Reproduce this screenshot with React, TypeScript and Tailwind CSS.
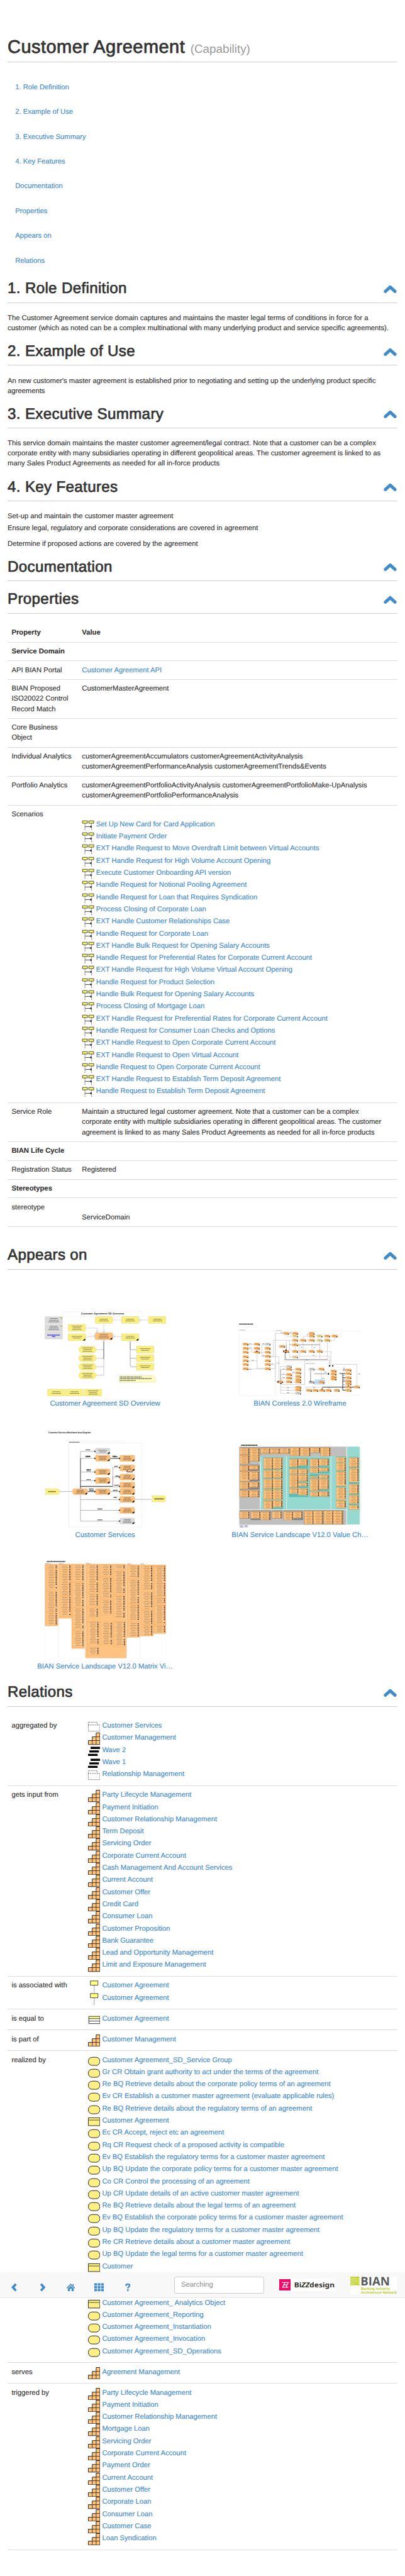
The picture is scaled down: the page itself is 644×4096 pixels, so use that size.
import React from "react";

/* ---------- text data ---------- */

const NAV = [
  "1. Role Definition",
  "2. Example of Use",
  "3. Executive Summary",
  "4. Key Features",
  "Documentation",
  "Properties",
  "Appears on",
  "Relations",
];

const SCENARIOS = [
  "Set Up New Card for Card Application",
  "Initiate Payment Order",
  "EXT Handle Request to Move Overdraft Limit between Virtual Accounts",
  "EXT Handle Request for High Volume Account Opening",
  "Execute Customer Onboarding API version",
  "Handle Request for Notional Pooling Agreement",
  "Handle Request for Loan that Requires Syndication",
  "Process Closing of Corporate Loan",
  "EXT Handle Customer Relationships Case",
  "Handle Request for Corporate Loan",
  "EXT Handle Bulk Request for Opening Salary Accounts",
  "Handle Request for Preferential Rates for Corporate Current Account",
  "EXT Handle Request for High Volume Virtual Account Opening",
  "Handle Request for Product Selection",
  "Handle Bulk Request for Opening Salary Accounts",
  "Process Closing of Mortgage Loan",
  "EXT Handle Request for Preferential Rates for Corporate Current Account",
  "Handle Request for Consumer Loan Checks and Options",
  "EXT Handle Request to Open Corporate Current Account",
  "EXT Handle Request to Open Virtual Account",
  "Handle Request to Open Corporate Current Account",
  "EXT Handle Request to Establish Term Deposit Agreement",
  "Handle Request to Establish Term Deposit Agreement",
];

type IconKind = "group" | "cap" | "wave" | "life" | "table" | "service" | "object" | "sequence" | "none";
type Item = [IconKind, string];

const caps = (...names: string[]): Item[] => names.map((n) => ["cap", n]);
const services = (...names: string[]): Item[] => names.map((n) => ["service", n]);

const RELATIONS: { label: string; items: Item[] }[] = [
  {
    label: "aggregated by",
    items: [
      ["group", "Customer Services"],
      ["cap", "Customer Management"],
      ["wave", "Wave 2"],
      ["wave", "Wave 1"],
      ["group", "Relationship Management"],
    ],
  },
  {
    label: "gets input from",
    items: caps(
      "Party Lifecycle Management",
      "Payment Initiation",
      "Customer Relationship Management",
      "Term Deposit",
      "Servicing Order",
      "Corporate Current Account",
      "Cash Management And Account Services",
      "Current Account",
      "Customer Offer",
      "Credit Card",
      "Consumer Loan",
      "Customer Proposition",
      "Bank Guarantee",
      "Lead and Opportunity Management",
      "Limit and Exposure Management",
    ),
  },
  {
    label: "is associated with",
    items: [
      ["life", "Customer Agreement"],
      ["life", "Customer Agreement"],
    ],
  },
  { label: "is equal to", items: [["table", "Customer Agreement"]] },
  { label: "is part of", items: caps("Customer Management") },
  {
    label: "realized by",
    items: [
      ...services(
        "Customer Agreement_SD_Service Group",
        "Gr CR Obtain grant authority to act under the terms of the agreement",
        "Re BQ Retrieve details about the corporate policy terms of an agreement",
        "Ev CR Establish a customer master agreement (evaluate applicable rules)",
        "Re BQ Retrieve details about the regulatory terms of an agreement",
      ),
      ["object", "Customer Agreement"],
      ...services(
        "Ec CR Accept, reject etc an agreement",
        "Rq CR Request check of a proposed activity is compatible",
        "Ev BQ Establish the regulatory terms for a customer master agreement",
        "Up BQ Update the corporate policy terms for a customer master agreement",
        "Co CR Control the processing of an agreement",
        "Up CR Update details of an active customer master agreement",
        "Re BQ Retrieve details about the legal terms of an agreement",
        "Ev BQ Establish the corporate policy terms for a customer master agreement",
        "Up BQ Update the regulatory terms for a customer master agreement",
        "Re CR Retrieve details about a customer master agreement",
        "Up BQ Update the legal terms for a customer master agreement",
      ),
      ["object", "Customer"],
      ["none", ""],
      ["none", ""],
      ["object", "Customer Agreement_ Analytics Object"],
      ...services(
        "Customer Agreement_Reporting",
        "Customer Agreement_Instantiation",
        "Customer Agreement_Invocation",
        "Customer Agreement_SD_Operations",
      ),
    ],
  },
  { label: "serves", items: caps("Agreement Management") },
  {
    label: "triggered by",
    items: caps(
      "Party Lifecycle Management",
      "Payment Initiation",
      "Customer Relationship Management",
      "Mortgage Loan",
      "Servicing Order",
      "Corporate Current Account",
      "Payment Order",
      "Current Account",
      "Customer Offer",
      "Corporate Loan",
      "Consumer Loan",
      "Customer Case",
      "Loan Syndication",
    ),
  },
];

/* ---------- small icons ---------- */

function TypeIcon({ kind }: { kind: IconKind }) {
  return (
    <svg viewBox="0 0 24 24" className="block size-6 shrink-0" fill="none">
      {kind === "group" && (
        <path d="M.5 8.500V3h17.500v5.500M.5 8.500h23V20.800H.5z" stroke="#555" strokeDasharray="2.200 1.200" />
      )}
      {kind === "cap" && (
        <>
          <path d="M.6 15.600H8.300V8.300H16V.6h7.400V23.400H.6z" fill="#ffc37d" stroke="#111" strokeWidth="1.100" />
          <path d="M8.300 15.600V23.400M16 8.300V23.400M8.300 15.600H23.400M16 8.300H23.400" stroke="#3a2a14" strokeWidth="1.100" />
        </>
      )}
      {kind === "wave" && <path d="M5 3h19v4.400H5zM2.500 10.200h19v4.200H2.500zM0 17.200h19v4H0z" fill="#000" />}
      {kind === "life" && (
        <>
          <path d="M4.600 1h15v8.500h-15z" fill="#ffff80" stroke="#222" />
          <path d="M12.200 10v14" stroke="#444" strokeDasharray="2 1.200" />
        </>
      )}
      {kind === "table" && (
        <>
          <path d="M1.500 5.200h22v14.300h-22z" fill="#fff" />
          <path d="M1.500 5.200h22v4.500h-22z" fill="#ffff80" />
          <path d="M1.500 5.200h22v14.300h-22zM1.500 9.700h22M1.500 14.500h22" stroke="#222" strokeWidth="1.100" />
        </>
      )}
      {kind === "service" && (
        <rect x=".6" y="4" width="22.800" height="16" rx="7.500" fill="#fcef83" stroke="#222" strokeWidth="1.200" />
      )}
      {kind === "object" && (
        <>
          <path d="M.6 4.200h22.800v15.600H.6z" fill="#fcef83" stroke="#2b2b20" strokeWidth="1.200" />
          <path d="M1 8.800h22" stroke="#8a8350" strokeWidth="1.800" />
        </>
      )}
      {kind === "sequence" && (
        <>
          <path d="M6.300 8v13M19.500 8v13" stroke="#444" strokeDasharray="2.500 1" />
          <path d="M1.500 2.700h9.700v4.800H1.500zM14 2.700h9.700v4.800H14z" fill="#ffff66" stroke="#222" />
          <path d="M6.500 14.200H18" stroke="#222" />
          <path d="M17 11.500l3 2.700-3 2.700z" fill="#111" />
        </>
      )}
    </svg>
  );
}

function UpIcon() {
  return (
    <svg viewBox="0 0 26 17" className="mr-px h-[17px] w-[26px]" fill="none">
      <path
        d="M3.500 12.900 13 4.200l9.500 8.700"
        stroke="#428bca"
        strokeWidth="6.200"
        strokeLinecap="round"
        strokeLinejoin="round"
      />
    </svg>
  );
}

/* ---------- diagram thumbnails ---------- */

const ORANGE = "#ffc27d";
const ORANGE_LINE = "#e8a55c";
const YELLOW = "#fbef82";
const YELLOW_LINE = "#e6da70";
const GRAY = "#dcdcdc";

function Node({
  x,
  y,
  w = 103,
  h = 40,
  fill = YELLOW,
  line = YELLOW_LINE,
  r = 1,
  rows = 2,
  text = 3.4,
  mark = false,
}: {
  x: number;
  y: number;
  w?: number;
  h?: number;
  fill?: string;
  line?: string;
  r?: number;
  rows?: number;
  text?: number;
  mark?: boolean;
}) {
  const widths = [0.6, 0.46, 0.54];
  const step = Math.min(10, h / (rows + 1));
  const d = Array.from({ length: rows }, (_, i) => {
    const len = w * widths[(i + Math.round(x)) % 3];
    const yy = y + h / 2 + (i - (rows - 1) / 2) * step;
    return `M${x + (w - len) / 2} ${yy}h${len}`;
  }).join("");
  return (
    <g>
      <rect x={x} y={y} width={w} height={h} rx={r} fill={fill} stroke={line} strokeWidth="2" />
      <path d={d} stroke="#222" strokeOpacity=".72" strokeWidth={text} strokeDasharray="5 1.500 3 1 7 1.500" fill="none" />
      {mark && <path d={`M${x + w - 12} ${y + h - 5}h5v-4h5v4h-4v4h-6z`} fill="#000" stroke="#000" strokeWidth="2" />}
    </g>
  );
}

function Stack({ x, y, w, h, fill = ORANGE, pitch = 9 }: { x: number; y: number; w: number; h: number; fill?: string; pitch?: number }) {
  let words = "";
  let marks = "";
  let n = 0;
  for (let yy = y + 6; yy < y + h - 3; yy += pitch, n++) {
    const len = w * [0.45, 0.58, 0.4, 0.5, 0.62][(n + Math.round(x)) % 5];
    words += `M${x + (w - len) / 2 - 2} ${yy}h${len}`;
    if (n % 11 !== 9) marks += `M${x + w - 8} ${yy - 2}h6v5h-6z`;
  }
  return (
    <g>
      <rect x={x} y={y} width={w} height={h} fill={fill} stroke={ORANGE_LINE} strokeWidth="1.200" />
      <path d={words} stroke="#3c2a14" strokeOpacity=".6" strokeWidth="2.200" strokeDasharray="4 .8 7 .8" fill="none" />
      <path d={marks} fill="#111" />
    </g>
  );
}

function Thumb({ dx, dy, children }: { dx: number; dy: number; children: React.ReactNode }) {
  return (
    <svg viewBox="0 0 240 200" className="block h-[200px] w-[240px]">
      <g transform={`translate(${dx} ${dy}) scale(0.33333)`}>{children}</g>
    </svg>
  );
}

function OverviewDiagram() {
  return (
    <Thumb dx={-27.5} dy={10}>
      <path d="M190 70h472v27H190z" fill="#fff" stroke="#e8e8e8" strokeWidth="2" />
      <text x="426" y="84" textAnchor="middle" fontSize="14.500" fontWeight="700" fill="#000" textLength="254">
        Customer Agreement SD Overview
      </text>
      <g fill="none" stroke="#999" strokeWidth="2">
        <path d="M485 119h53M645 119h55M326 167h68v20M433 140v47M326 220l48-5M538 220l-45-5" strokeDasharray="5 2" />
        <path d="M388 295h45M388 346h45M388 396h45M388 446h45V245" />
        <path d="M627 295h-33q-4 0-4-4V245M627 346h-33q-4 0-4-4M627 396h-28q-9 0-9-9V245" stroke="#666" />
        <path d="M433 243V350" stroke="#555" strokeWidth="3" />
      </g>
      <g fill="#fff" stroke="#999" strokeWidth="2">
        <circle cx="394" cy="188" r="5" />
        <circle cx="433" cy="188" r="5" />
        <circle cx="378" cy="215" r="5" />
        <circle cx="491" cy="216" r="5" />
        <circle cx="433" cy="243" r="5" />
        <circle cx="590" cy="248" r="5" />
        <circle cx="648" cy="119" r="4.500" />
      </g>
      {[100, 146, 191].map((y, i) => (
        <g key={y}>
          <Node x={85} y={y} fill={GRAY} line="#c8c8c8" rows={i === 2 ? 0 : 3} />
          {i < 2 && <path d={`M175 ${y + 2}h7v5h4v5h-7v-5h-4z`} fill="#e8dd4f" stroke="#888" />}
        </g>
      ))}
      <path d="M98 208h76M126 217h20" stroke="#2222dd" strokeWidth="4.500" strokeDasharray="6 1 9 1" />
      <Node x={382} y={99} r={8} />
      <Node x={538} y={99} />
      <Node x={700} y={99} />
      <Node x={222} y={145} rows={3} />
      <Node x={222} y={201} mark />
      <Node x={382} y={195} r={7} fill={ORANGE} line={ORANGE_LINE} rows={3} mark />
      <Node x={538} y={201} mark />
      {[274, 325, 376, 427].map((y) => (
        <Node key={y} x={285} y={y} r={20} rows={3} />
      ))}
      {[274, 325, 376].map((y) => (
        <Node key={y} x={627} y={y} />
      ))}
      <path d="M526 449h200l14 13v26H526z" fill="#ffffc4" stroke="#e0da90" strokeWidth="2" />
      <path d="M528 457h130M528 466h190M528 477h95" stroke="#222" strokeWidth="3.600" strokeDasharray="5 1.500 9 2 3 1" />
      <Node x={100} y={529} />
      <Node x={208} y={529} />
      <Node x={318} y={529} rows={3} />
    </Thumb>
  );
}

const WIRE_NODES: [number, number, string?][] = [
  [120, 255], [120, 280], [120, 303], [120, 330], [120, 353], [120, 376], [120, 401],
  [187, 255], [187, 280], [187, 303],
  [251, 255, GRAY], [251, 280], [251, 303], [251, 327], [251, 353], [251, 376], [251, 401],
  [360, 191], [414, 191], [414, 207, "#f3dfa0"], [512, 191], [512, 207],
  [559, 207, "#f3dfa0"], [604, 207], [648, 207],
  [414, 232], [461, 232], [512, 232], [559, 232, "#f3dfa0"], [604, 232],
  [337, 268], [414, 259], [360, 298], [414, 298], [461, 298], [512, 298], [559, 298], [414, 331, "#f3dfa0"],
  [377, 388, GRAY], [377, 404], [377, 435], [377, 456], [326, 478], [377, 478],
  [432, 404], [432, 426], [432, 447], [432, 465], [432, 479], [432, 511], [432, 527], [432, 546, GRAY],
  [512, 403, GRAY], [569, 403], [512, 481, "#c4c4c4"], [569, 480],
  [642, 415], [642, 432], [642, 450], [642, 462],
  [730, 409], [730, 430], [730, 454], [730, 474], [730, 489], [730, 509], [730, 529], [780, 509],
  [496, 529], [534, 529], [573, 529], [612, 529], [661, 529],
];

function WireframeDiagram() {
  return (
    <Thumb dx={-32.5} dy={10}>
      <path d="M99 143h84" stroke="#111" strokeWidth="5" strokeDasharray="9 1 5 1.500" />
      <path d="M100 179h34" stroke="#666" strokeWidth="2.500" strokeDasharray="5 1" />
      <path d="M318 182h32M320 374h20M492 377h56" stroke="#666" strokeWidth="2.500" strokeDasharray="5 1" />
      <g fill="none" stroke="#ededed" strokeWidth="2">
        <path d="M100 182h211v387H100zM317 184h501v178H317zM317 376h165v190H317zM490 379h328v187H490zM629 398h65v98h-65z" />
      </g>
      <rect x="549" y="473" width="59" height="27" fill="#bfe2fb" stroke="#8ccaf5" strokeWidth="1.500" />
      <g fill="none" stroke="#bbb" strokeWidth="2.200">
        <path d="M155 264h32M155 288h20v23h12M155 361h50M155 409h96M205 318v88h46M220 311h31M233 311v-47h18M233 311v24h18M285 335h16V239h113M285 384h28v100h14M285 407h28V199h47M285 335h49v150" />
        <path d="M396 199h18M380 206v9h34M431 246v60M378 300v-60M397 300V240M478 232v-17h34M478 246v60M530 260v40M577 245v55M622 245v108H373v-40M640 239h26v-18M500 239h12M449 267h128v80M455 267v66h180v60M397 306V339h20M368 315v43h266v30M594 306h49v80M488 353l-2 149H344M655 392v-10h142v125" />
        <path d="M344 478V394h33M344 412h33M344 443h33M344 463h33M344 490v64h88M344 519h88M344 535h88M360 486h17M412 412h20M412 475h5v-42h15M412 486h20M530 411h39M523 415v68M545 488h24M586 415v66M540 438h90M496 529v-12h290" />
      </g>
      <path d="M397 265h180M378 266v40h-18M373 315v38h250M344 412v66M522 415v70M546 438h84" fill="none" stroke="#777" strokeWidth="2.200" />
      <path d="M693 436h20V535h17M713 415h17M713 436h17M713 461h17M713 481h17M713 517h67M590 517h123" fill="none" stroke="#111" strokeWidth="3" />
      <path d="M345 194h10M398 194h10M160 260h12M237 260h10M160 284h10M237 331h10M175 358h10M160 412h10M383 520h11M383 535h11M383 550h11M500 205h8M560 243h12M604 428h12M535 328h10M495 356h12M805 439h12M592 464h10M715 405h12M716 447h10M716 470h10M716 503h10M466 282h8M540 282h8M290 379h10M357 410h12M357 440h12M357 460h12M415 428h12M538 519h10M626 519h12" stroke="#777" strokeWidth="3.500" strokeDasharray="5 1" />
      {WIRE_NODES.map(([x, y, fill], i) => (
        <g key={i}>
          <rect x={x} y={y} width="34" height="14" rx="3" fill={fill ?? "#fdb96c"} stroke={fill ? "#bbb" : "#e9a050"} strokeWidth="1" />
          <path d={`M${x + 7} ${y + 4}h20M${x + 9} ${y + 9}h14`} stroke="#4a3010" strokeOpacity=".55" strokeWidth="2" strokeDasharray="4 1" />
          <path d={`M${x + 27} ${y + 9}h6v5h-6z`} fill="#111" />
        </g>
      ))}
      <path d="M626 433h6v10h-6zM631 387h8v7h-8zM650 387h7v7h-7zM200 301h7v6h-7zM373 295h8v7h-8zM360 301h6v6h-6zM326 482h6v8h-6zM342 492h9v5h-9zM370 308h9v6h-9zM744 505h5v5h-5zM588 525h6v5h-6zM518 480h7v4h-7z" fill="#000" />
    </Thumb>
  );
}

function ServicesDiagram() {
  const middle: [number, number, string?][] = [[384, 190, GRAY], [384, 232], [384, 313], [384, 364], [384, 430], [250, 430]];
  const right: [number, string?][] = [[232], [289], [343], [391], [430], [476], [541], [604, GRAY]];
  return (
    <Thumb dx={-27.5} dy={-20}>
      <text x="104" y="102" fontSize="13" fontWeight="700" fill="#000" textLength="252">
        Customer Services Wireframe Area Diagram
      </text>
      <path d="M226 160V149h325v11M226 160h432v496H226z" fill="none" stroke="#e4e4e4" strokeWidth="2" />
      <path d="M228 154h62" stroke="#333" strokeWidth="3.600" strokeDasharray="6 1.500" />
      <g fill="none" stroke="#777" strokeWidth="2">
        <path d="M171 447h79M295 430V208h88M295 250h88M295 331h88M295 382h88M338 447h45M470 250h58M295 415h192V361h41M487 415V305h41M295 418h233M470 447h58M295 464v158h233M295 494h233M295 558h233M571 343v-20M616 493h100" />
      </g>
      <path d="M295 430V250M338 447h45M470 250h56M295 416h190" stroke="#222" strokeWidth="2.500" fill="none" />
      <path d="M325 199h28M325 236h28M325 241h28M330 316h26M330 324h26M330 376h26M346 431h26M346 439h28M484 236h24M487 241h28M496 297h22M502 355h22M496 409h26M487 440h28M491 481h20M396 550h28M396 615h28M577 330h28" stroke="#222" strokeWidth="4" strokeDasharray="5 1 8 1" />
      {middle.map(([x, y, fill], i) => (
        <Node key={i} x={x} y={y} w={86} h={34} r={6} fill={fill ?? ORANGE} line={fill ? "#ccc" : ORANGE_LINE} rows={y === 190 ? 2 : 3} mark />
      ))}
      {right.map(([y, fill], i) => (
        <Node key={i} x={529} y={y} w={87} h={35} r={6} fill={fill ?? ORANGE} line={fill ? "#ccc" : ORANGE_LINE} rows={3} mark />
      ))}
      <path d="M378 203l8 5-8 5zM378 245l8 5-8 5zM378 326l8 5-8 5zM378 377l8 5-8 5zM378 442l8 5-8 5zM524 245l8 5-8 5zM524 300l8 5-8 5zM524 356l8 5-8 5zM524 411l8 5-8 5zM524 442l8 5-8 5zM524 489l8 5-8 5zM524 553l8 5-8 5zM524 617l8 5-8 5zM566 328l6-8 5 8z" fill="#000" />
      <path d="M84 430h68q19 0 19 17t-19 17H84l7-17zM717 472h68q19 0 19 18t-19 18h-68l7-18z" fill={YELLOW} stroke={YELLOW_LINE} strokeWidth="2" />
      <path d="M104 447h46M733 490h56" stroke="#222" strokeWidth="4.500" strokeDasharray="5 1 8 1" />
    </Thumb>
  );
}

const VALUE_BACK: [number, number, number, number][] = [
  [226, 876, 176, 38], [401, 874, 60, 52], [462, 874, 60, 52], [522, 874, 60, 34], [582, 874, 59, 52],
  [102, 876, 60, 96], [162, 876, 59, 82], [102, 978, 118, 36], [102, 1016, 118, 60], [102, 1079, 118, 46], [102, 1128, 118, 43],
  [102, 1250, 59, 48], [168, 1250, 119, 56], [294, 1250, 60, 48], [362, 1250, 115, 56], [484, 1248, 114, 83], [600, 1248, 117, 83],
];
const VALUE_TEAL: [number, number, number, number][] = [
  [242, 932, 117, 308], [394, 937, 115, 232], [516, 937, 117, 60], [516, 991, 119, 38], [516, 1033, 117, 136],
  [674, 929, 60, 308], [750, 931, 60, 314],
];
const VALUE_STACKS: [number, number, number, number][] = [
  [103, 879, 56, 39], [103, 922, 56, 49], [164, 879, 56, 77],
  [227, 880, 56, 31], [284, 880, 56, 31], [342, 880, 57, 31],
  [402, 876, 58, 49], [463, 876, 58, 49], [523, 876, 57, 30], [583, 876, 57, 49],
  [103, 982, 56, 30], [161, 982, 56, 22], [103, 1018, 56, 56], [161, 1018, 56, 48],
  [103, 1081, 56, 40], [161, 1081, 56, 30], [103, 1130, 56, 39], [161, 1130, 56, 39],
  [244, 936, 56, 66], [300, 936, 56, 66], [244, 1009, 56, 47], [300, 1009, 56, 47],
  [244, 1062, 56, 57], [300, 1062, 56, 57], [244, 1125, 56, 59], [300, 1125, 56, 59],
  [244, 1190, 56, 49], [300, 1190, 56, 39],
  [396, 943, 55, 48], [451, 943, 56, 39], [396, 1002, 55, 29], [451, 1002, 56, 29],
  [396, 1036, 55, 76], [451, 1036, 56, 39], [451, 1084, 56, 20], [396, 1118, 55, 31], [451, 1118, 56, 40],
  [519, 942, 55, 48], [574, 942, 57, 40], [519, 996, 55, 30], [574, 996, 57, 21],
  [519, 1047, 55, 10], [574, 1037, 57, 20], [519, 1062, 55, 68], [574, 1062, 57, 60], [519, 1135, 55, 30], [574, 1135, 57, 30],
  [675, 933, 57, 30], [675, 967, 57, 47], [675, 1019, 57, 84], [675, 1112, 57, 74], [675, 1191, 57, 42],
  [751, 935, 57, 57], [751, 999, 57, 82], [751, 1093, 57, 57], [751, 1158, 57, 50], [751, 1217, 57, 26],
  [103, 1255, 57, 40], [169, 1255, 57, 40], [226, 1255, 57, 49], [295, 1255, 57, 40], [363, 1255, 56, 50], [419, 1255, 56, 38],
  [486, 1251, 55, 78], [541, 1251, 56, 78], [602, 1251, 56, 78], [658, 1251, 57, 78],
];

function ValueChainDiagram() {
  return (
    <Thumb dx={-32.5} dy={-250}>
      <path d="M110 862h98" stroke="#111" strokeWidth="5" strokeDasharray="7 1.200 10 1.500" />
      <path d="M99 870h637v373H99zM99 1245h637v89H99z" fill="#bfbfbf" />
      <path d="M223 928h520v314H223zM738 870h75v462h-75z" fill="#96d9d0" />
      <path d="M99 1244h637M736 870v463M223 928v314l8-157zM380 928v314M643 928v314" stroke="#e1f2ef" strokeWidth="3.500" fill="none" />
      <path d="M814 870q8 230 0 462" fill="none" stroke="#b9e5df" strokeWidth="3" />
      {VALUE_BACK.map(([x, y, w, h], i) => (
        <rect key={i} x={x - 1} y={y - 1} width={w + 2} height={h + 1} fill="#858585" />
      ))}
      {VALUE_TEAL.map(([x, y, w, h], i) => (
        <rect key={i} x={x} y={y} width={w} height={h} fill="#5cbcb8" />
      ))}
      {VALUE_STACKS.map(([x, y, w, h], i) => (
        <Stack key={i} x={x} y={y} w={w} h={h} pitch={9.4} />
      ))}
      <path d="M99 1335h54v16H99z" fill="#dcdcf8" />
      <path d="M106 1339h12M132 1339h16M106 1344h12M133 1344h14M107 1349h11" stroke="#888" strokeWidth="2.500" />
    </Thumb>
  );
}

const MATRIX_BACK: [number, number, number, number][] = [
  [85, 877, 77, 367], [166, 877, 77, 322], [243, 877, 77, 501], [325, 877, 242, 557],
  [571, 880, 77, 432], [651, 882, 76, 422], [727, 882, 76, 407],
];
const MATRIX_STACKS: [number, number, number, number][] = [
  [87, 880, 73, 26], [87, 908, 73, 120], [87, 1036, 73, 124], [87, 1162, 73, 80],
  [168, 880, 73, 185], [168, 1067, 73, 122],
  [245, 880, 73, 102], [245, 985, 73, 148], [245, 1136, 73, 133], [245, 1271, 73, 100],
  [330, 880, 73, 168], [330, 1050, 73, 82], [330, 1136, 73, 60], [410, 880, 73, 68], [410, 952, 73, 132], [410, 1088, 73, 92],
  [489, 880, 73, 30], [489, 916, 73, 140], [489, 1060, 73, 134],
  [334, 1216, 73, 142], [334, 1368, 73, 50], [413, 1220, 73, 136], [491, 1216, 73, 152],
  [573, 882, 73, 82], [573, 967, 73, 145], [573, 1115, 73, 102], [573, 1222, 73, 84],
  [653, 884, 73, 145], [653, 1040, 73, 104], [653, 1148, 73, 86], [653, 1236, 73, 66],
  [729, 884, 73, 186], [729, 1074, 73, 38], [729, 1116, 73, 120], [729, 1238, 73, 48],
];

function MatrixDiagram() {
  return (
    <Thumb dx={-27.5} dy={-280}>
      <path d="M95 862h110" stroke="#111" strokeWidth="4.500" strokeDasharray="6 1.200 9 1.500" />
      <path d="M86 871h24M86 875h34M168 871h20M168 875h28M327 871h20M327 875h34M572 874h22M572 878h30M652 874h18M652 878h24" stroke="#888" strokeWidth="2" strokeDasharray="5 1" />
      <path d="M85 870h78v567H85zM166 870h156v567H166zM325 869h242v568H325zM570 872h77v565h-77zM650 872h153v565H650z" fill="none" stroke="#eee" strokeWidth="1.500" />
      {MATRIX_BACK.map(([x, y, w, h], i) => (
        <rect key={i} x={x} y={y} width={w} height={h} rx="2" fill="#ffc381" stroke="#f3b06a" strokeWidth="1.500" />
      ))}
      {MATRIX_STACKS.map(([x, y, w, h], i) => (
        <g key={i}>
          <rect x={x} y={y} width={w} height={h} fill="none" stroke="#efb06a" strokeWidth="1" />
          <Stack x={x + 5} y={y + 3} w={w - 9} h={h - 4} fill="#ffc586" pitch={10} />
        </g>
      ))}
    </Thumb>
  );
}

const THUMBS: [React.ComponentType, string][] = [
  [OverviewDiagram, "Customer Agreement SD Overview"],
  [WireframeDiagram, "BIAN Coreless 2.0 Wireframe"],
  [ServicesDiagram, "Customer Services"],
  [ValueChainDiagram, "BIAN Service Landscape V12.0 Value Ch…"],
  [MatrixDiagram, "BIAN Service Landscape V12.0 Matrix Vi…"],
];

/* ---------- page parts ---------- */

function Heading({ children }: { children: React.ReactNode }) {
  return (
    <div className="mt-5 mb-5 flex h-11 items-start justify-between border-b border-[#ccc]">
      <h2 className="text-[30px] leading-[33px] tracking-[0.42px] [-webkit-text-stroke:0.9px_#333]">{children}</h2>
      <span className="flex h-[33px] items-center">
        <UpIcon />
      </span>
    </div>
  );
}

function Row({ label, children, bold = false, first = false }: { label: string; children?: React.ReactNode; bold?: boolean; first?: boolean }) {
  return (
    <div className={first ? "flex p-2" : "flex border-t border-[#ddd] px-2 pt-[7.76px] pb-2"}>
      <div className={bold ? "w-[139px] shrink-0 pr-2 font-bold" : "w-[139px] shrink-0 pr-2"}>{label}</div>
      <div className="min-w-0 flex-1 whitespace-nowrap">{children}</div>
    </div>
  );
}

function LinkList({ items }: { items: Item[] }) {
  return (
    <ul>
      {items.map(([kind, name], i) => (
        <li key={i} className="flex h-6 gap-1 text-[#428bca]">
          {kind !== "none" && <TypeIcon kind={kind} />}
          <a>{name}</a>
        </li>
      ))}
    </ul>
  );
}

function Toolbar() {
  return (
    <div className="absolute top-[4492px] left-0 flex h-[51px] w-full items-start border-b border-[#e7e7e7] bg-[#f8f8f8]">
      <div className="flex pt-5">
        <svg viewBox="0 0 56 20" className="h-5 w-14" fill="none">
          <path d="M31.500 3.500 25.500 10l6 6.500" stroke="#428bca" strokeWidth="4.600" />
        </svg>
        <svg viewBox="0 0 56 20" className="h-5 w-14" fill="none">
          <path d="M25 3.500 31 10l-6 6.500" stroke="#428bca" strokeWidth="4.600" />
        </svg>
        <svg viewBox="0 0 56 20" className="h-5 w-14" fill="#428bca">
          <path d="M28 2.500 36.400 11l-1.400 1.300L28 5.500l-7 6.800-1.400-1.300zM31.500 3.500h2.500v4l-2.500-2.500z" />
          <path d="M28 7l5.800 5.500v5h-4.200v-5h-3.200v5h-4.200v-5z" />
        </svg>
        <svg viewBox="0 0 56 20" className="h-5 w-14" fill="#428bca">
          {[2, 7.6, 13.2].map((y) =>
            [18.600, 25.300, 32].map((x) => <rect key={`${x}-${y}`} x={x} y={y} width="5.400" height="4.400" rx=".6" />),
          )}
        </svg>
        <svg viewBox="0 0 56 20" className="h-5 w-14" fill="none">
          <path d="M25.300 7.200q0-3.600 3.500-3.600 3.600 0 3.600 2.700 0 1.700-1.900 2.900-1.500 1-1.500 2.800" stroke="#428bca" strokeWidth="3" />
          <path d="M27.400 14h3.200v3.200h-3.200z" fill="#428bca" />
        </svg>
      </div>
      <div className="mt-2 ml-[65px] flex h-[34px] w-[177px] items-center rounded border border-[#ccc] bg-white px-3 text-[#999]">
        Searching
      </div>
      <div className="mt-3 ml-[30px] flex h-[25px] w-[111px] items-center bg-white">
        <svg viewBox="0 0 23 23" className="size-[23px] shrink-0" fill="none">
          <path d="M0 0h23v23H0z" fill="#ef0a6a" />
          <path d="M5 6.500h6.500L6.500 16h5M11.500 6.500h6.500L13 16h5M8 11.300h8" stroke="#fff" strokeWidth="1.500" />
        </svg>
        <svg viewBox="0 0 88 25" className="h-[25px] w-[88px] overflow-visible">
          <text x="7" y="17" fontSize="13.500" fontWeight="700" fill="#333029" textLength="80" lengthAdjust="spacingAndGlyphs" className="font-['Noto_Sans',sans-serif]">
            Bi<tspan fontStyle="italic">ZZ</tspan>design
          </text>
        </svg>
      </div>
      <div className="mt-2 ml-[30px] flex h-[35px] w-[92px] bg-white">
        <svg viewBox="0 0 18 18" className="size-[18px] shrink-0">
          <path d="M0 0h18v18H0z" fill="#c1d22e" />
          <path d="M0 3q11-1 18 2.500M0 6q11-.5 18 3.500M0 9q10 0 18 4.500M0 12q8 .5 15 6M0 15q5 .5 9 3" fill="none" stroke="#fff" strokeWidth=".8" />
        </svg>
        <svg viewBox="18 0 74 35" className="h-[35px] w-[74px] overflow-visible font-['Open_Sans',sans-serif]" fontWeight="700">
          <text x="19.500" y="17.500" fontSize="23.500" fill="#58595b" textLength="58" lengthAdjust="spacingAndGlyphs">BIAN</text>
          <text x="20.500" y="26.500" fontSize="7" fill="#bccd1c" textLength="57" lengthAdjust="spacingAndGlyphs">Banking Industry</text>
          <text x="20.500" y="34" fontSize="7" fill="#bccd1c" textLength="71" lengthAdjust="spacingAndGlyphs">Architecture Network</text>
        </svg>
      </div>
    </div>
  );
}

export default function App() {
  return (
    <div className="relative h-[5092px] overflow-hidden bg-white px-[15px] pt-[73px] font-['Liberation_Sans',Arial,sans-serif] text-sm leading-5 text-[#333] [text-rendering:geometricPrecision] [zoom:0.8044] [-webkit-text-stroke-width:0.18px]">
      <header className="h-[50px] border-b border-[#ccc]">
        <h1 className="text-4xl leading-10 tracking-[0.6px] [-webkit-text-stroke:1px_#333]">
          Customer Agreement{" "}
          <small className="text-[23.4px] tracking-normal text-[#999] [-webkit-text-stroke:0]">(Capability)</small>
        </h1>
      </header>

      <nav className="mt-[25px] -mb-[5px] pl-[15px] text-[#428bca]">
        {NAV.map((n) => (
          <a key={n} className="flex h-[49px] items-center">
            {n}
          </a>
        ))}
      </nav>

      <Heading>1. Role Definition</Heading>
      <p className="whitespace-nowrap">
        The Customer Agreement service domain captures and maintains the master legal terms of conditions in force for a
        <br />
        customer (which as noted can be a complex multinational with many underlying product and service specific agreements).
      </p>

      <Heading>2. Example of Use</Heading>
      <p className="whitespace-nowrap">
        An new customer's master agreement is established prior to negotiating and setting up the underlying product specific
        <br />
        agreements
      </p>

      <Heading>3. Executive Summary</Heading>
      <p className="whitespace-nowrap">
        This service domain maintains the master customer agreement/legal contract. Note that a customer can be a complex
        <br />
        corporate entity with many subsidiaries operating in different geopolitical areas. The customer agreement is linked to as
        <br />
        many Sales Product Agreements as needed for all in-force products
      </p>

      <Heading>4. Key Features</Heading>
      <p>Set-up and maintain the customer master agreement</p>
      <p className="mt-1">Ensure legal, regulatory and corporate considerations are covered in agreement</p>
      <p className="mt-2.5">Determine if proposed actions are covered by the agreement</p>

      <Heading>Documentation</Heading>
      <Heading>Properties</Heading>

      <section className="border-b border-[#ddd]">
        <Row label="Property" bold first>
          <b>Value</b>
        </Row>
        <Row label="Service Domain" bold />
        <Row label="API BIAN Portal">
          <a className="text-[#428bca]">Customer Agreement API</a>
        </Row>
        <Row label="BIAN Proposed ISO20022 Control Record Match">CustomerMasterAgreement</Row>
        <Row label="Core Business Object" />
        <Row label="Individual Analytics">
          customerAgreementAccumulators customerAgreementActivityAnalysis
          <br />
          customerAgreementPerformanceAnalysis customerAgreementTrends&amp;Events
        </Row>
        <Row label="Portfolio Analytics">
          customerAgreementPortfolioActivityAnalysis customerAgreementPortfolioMake-UpAnalysis
          <br />
          customerAgreementPortfolioPerformanceAnalysis
        </Row>
        <Row label="Scenarios">
          <div className="pt-5">
            <LinkList items={SCENARIOS.map((s): Item => ["sequence", s])} />
          </div>
        </Row>
        <Row label="Service Role">
          Maintain a structured legal customer agreement. Note that a customer can be a complex
          <br />
          corporate entity with multiple subsidiaries operating in different geopolitical areas. The customer
          <br />
          agreement is linked to as many Sales Product Agreements as needed for all in-force products
        </Row>
        <Row label="BIAN Life Cycle" bold />
        <Row label="Registration Status">Registered</Row>
        <Row label="Stereotypes" bold />
        <Row label="stereotype">
          <div className="pt-5">ServiceDomain</div>
        </Row>
      </section>

      <div className="pt-5">
        <Heading>Appears on</Heading>
      </div>
      <section className="grid grid-cols-2">
        {THUMBS.map(([Diagram, caption]) => (
          <figure key={caption} className="flex h-[260px] flex-col items-center gap-[5px] pt-[30px]">
            <Diagram />
            <figcaption className="text-[#428bca]">{caption}</figcaption>
          </figure>
        ))}
      </section>

      <Heading>Relations</Heading>
      <section className="border-b border-[#ddd]">
        {RELATIONS.map((r, i) => (
          <Row key={r.label} label={r.label} first={i === 0}>
            <div className="pl-3">
              <LinkList items={r.items} />
            </div>
          </Row>
        ))}
      </section>

      <Toolbar />
    </div>
  );
}
